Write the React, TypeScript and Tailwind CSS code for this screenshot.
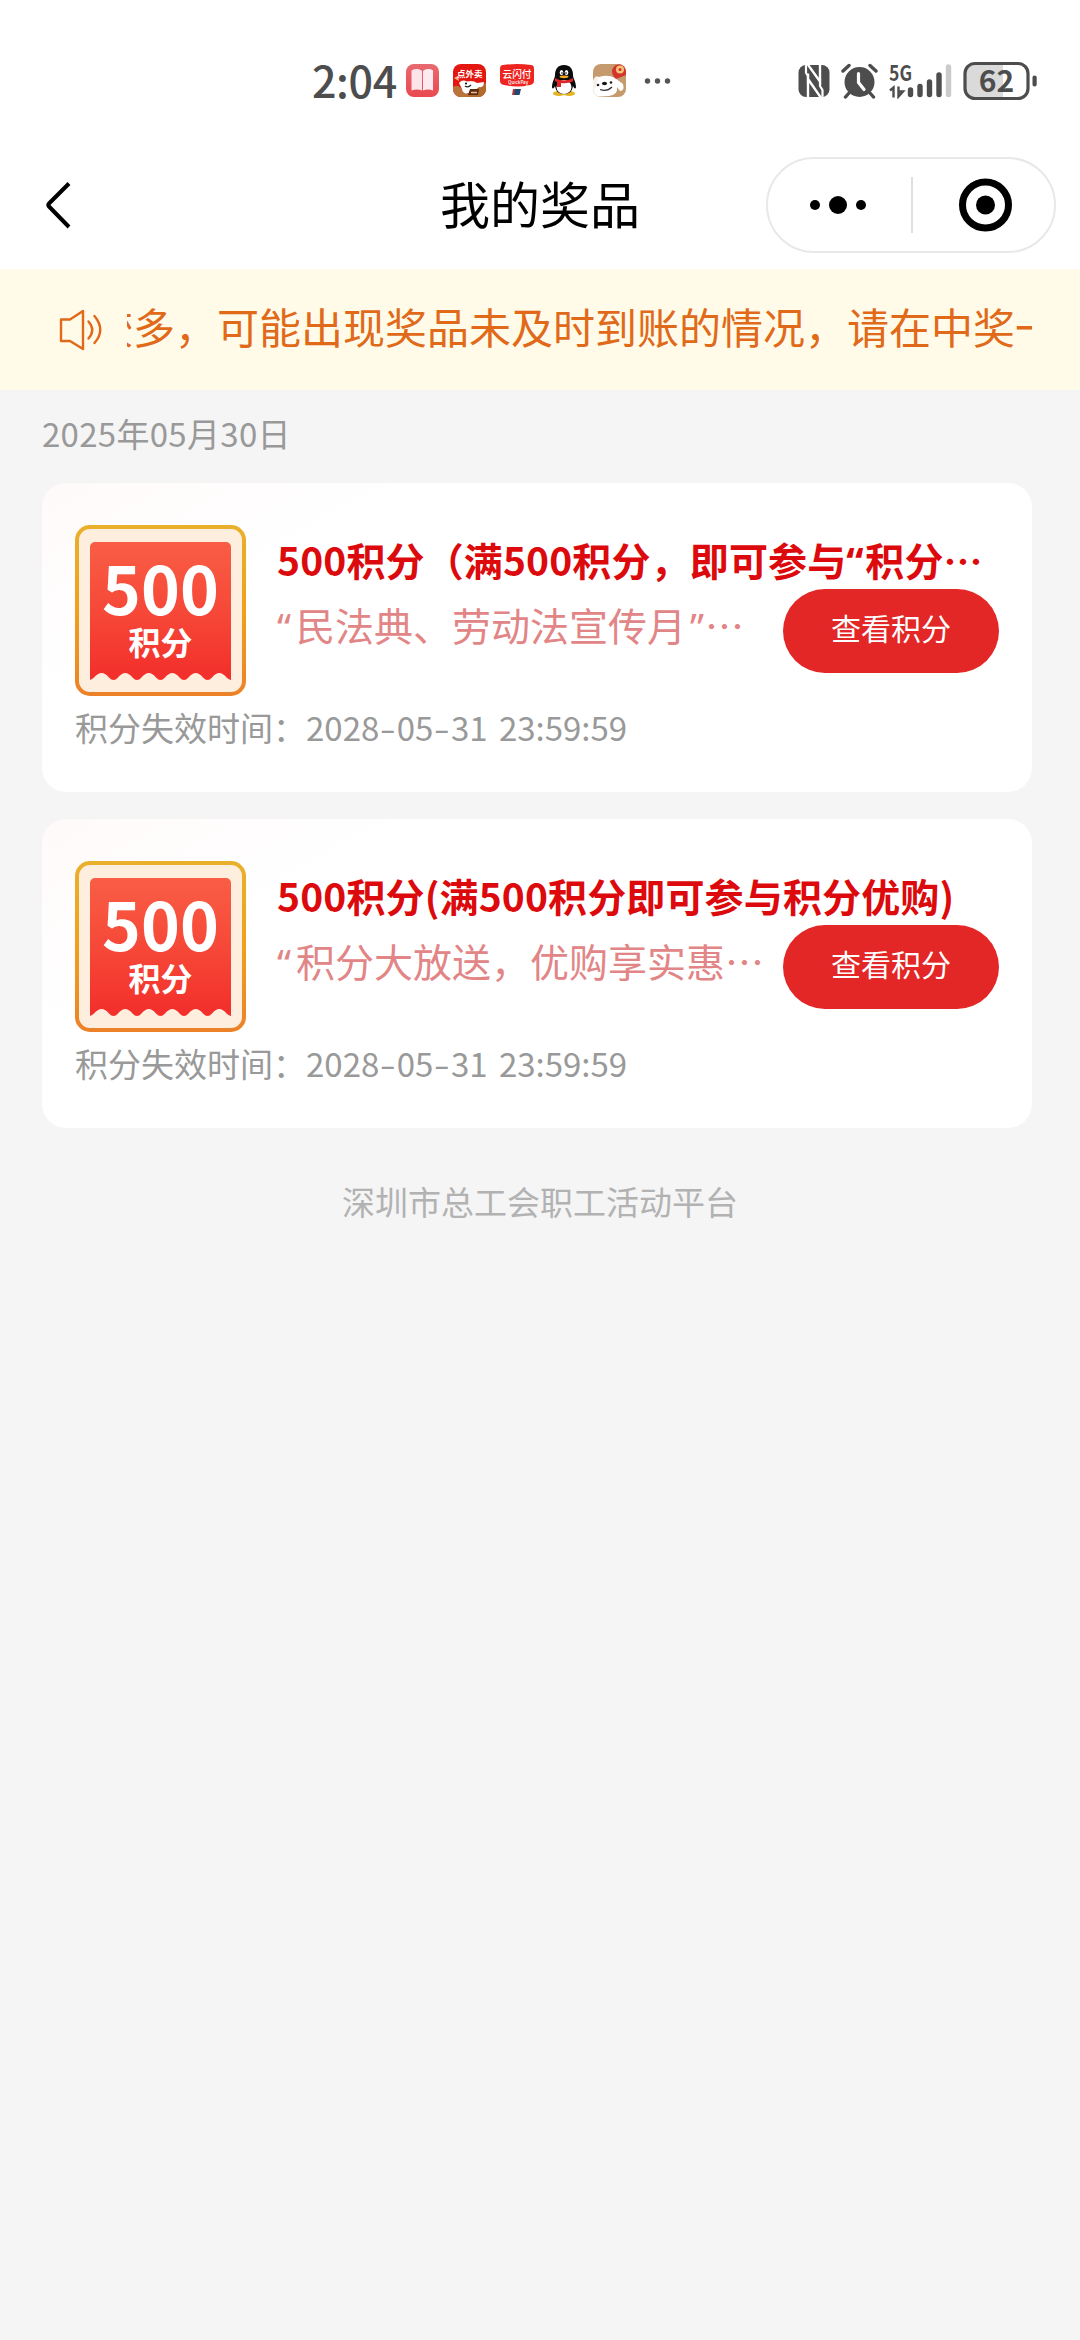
import React from "react";

const ink = "#4d4d4d";

function StatusBar() {
  return (
    <div className="flex h-[160px] w-full items-start pt-[60px] text-[#4d4d4d]">
      <div className="ml-[312px] h-[42px] w-[94px] text-[43px] font-medium leading-[38px] tracking-[-0.4px]">2:04</div>
      <div className="mt-[4px] flex h-[33px] items-center">
        {/* reader */}
        <svg width="33" height="33" viewBox="0 0 33 33">
          <defs>
            <linearGradient id="reader" x1="0" y1="0" x2="0" y2="1">
              <stop offset="0" stopColor="#e86a70" />
              <stop offset="1" stopColor="#e9494f" />
            </linearGradient>
          </defs>
          <rect width="33" height="33" rx="8" fill="url(#reader)" />
          <path d="M5.5 6.5C9 4.5 13 4.500 16 7V26.500C13 25 9 25 5.500 26.500Z" fill="#fde3ea" />
          <path d="M27 6.500C24 4.500 20 4.500 17 7V26.500C20 25 24 25 27 26.500Z" fill="#fdeaf0" />
        </svg>
        {/* takeaway */}
        <svg className="ml-[14px]" width="33" height="33" viewBox="0 0 33 33">
          <clipPath id="takeaway"><rect width="33" height="33" rx="8" /></clipPath>
          <g clipPath="url(#takeaway)">
            <rect width="33" height="33" fill="#e3170f" />
            <path d="M0 23Q4 20 8 24L18 33H0Z" fill="#b8743a" />
            <path d="M20 23L33 19V33H14Z" fill="#b06a2c" />
            <path d="M6 19Q9 15 14 17.500Q20 16 24 19L31 18Q31 24 26 23L20 28Q10 32 9 25Z" fill="#fff" />
            <path d="M1 14L5 12L6 17Z" fill="#f5b48a" />
            <path d="M17 25H26L25 31H15Z" fill="#5b2c12" />
            <path d="M18 28.500H24" stroke="#e9c08d" strokeWidth="1.500" />
            <path d="M12 22Q15 24 18 21" stroke="#222" strokeWidth="1.200" fill="none" />
            <circle cx="13" cy="19.500" r="1.100" fill="#111" />
            <text x="4" y="12.500" fontSize="8.500" fontWeight="700" fill="#fff">点外卖</text>
          </g>
        </svg>
        {/* quick pay */}
        <svg className="ml-[14px]" width="34" height="33" viewBox="0 0 34 33">
          <path d="M3 1Q17 -1 31 1Q34 1 34 5V17Q34 20 30 21Q17 24 4 21Q0 20 0 17V5Q0 1 3 1Z" fill="#ee2420" />
          <text x="2.500" y="13.500" fontSize="9.700" fontWeight="500" fill="#fff">云闪付</text>
          <text x="8" y="19.500" fontSize="4.500" fontWeight="500" fill="#fff">QuickPay</text>
          <path d="M13 25H17L15.500 31H12Z" fill="#b9343c" />
          <path d="M15 25H21L19.500 31H14Z" fill="#22486f" />
        </svg>
        {/* penguin */}
        <svg className="ml-[17px]" width="26" height="33" viewBox="0 0 26 33">
          <ellipse cx="8" cy="29.500" rx="6" ry="2.500" fill="#e6b422" />
          <ellipse cx="18" cy="29.500" rx="6" ry="2.500" fill="#e6b422" />
          <path d="M13 1C7 1 4 5 4 11C4 14 1 18 1 23C1 25 3 25 4 22C5 28 8 30 13 30S21 28 22 22C23 25 25 25 25 23C25 18 22 14 22 11C22 5 19 1 13 1Z" fill="#0b0b0b" />
          <ellipse cx="13" cy="23" rx="7.500" ry="7" fill="#fff" />
          <ellipse cx="10.500" cy="8.500" rx="1.800" ry="2.600" fill="#fff" />
          <ellipse cx="15.500" cy="8.500" rx="1.800" ry="2.600" fill="#fff" />
          <circle cx="11" cy="9" r=".8" fill="#000" />
          <circle cx="15" cy="9" r=".8" fill="#000" />
          <ellipse cx="13" cy="12.800" rx="4.500" ry="1.400" fill="#f4a91c" />
          <path d="M4 14Q13 19 22 14V17.500Q16 20 10 19V23H6V18L4 17Z" fill="#df2626" />
        </svg>
        {/* puppy */}
        <svg className="ml-[16px]" width="33" height="33" viewBox="0 0 33 33">
          <clipPath id="puppy"><rect width="33" height="33" rx="8" /></clipPath>
          <g clipPath="url(#puppy)">
            <rect width="33" height="33" fill="#c59a6d" />
            <path d="M0 33V17Q2 11 6 13Q15 10 22 14L30 20Q32 27 27 27L24 23Q25 31 16 32Z" fill="#fff" />
            <path d="M0 18Q2 11 5 13L3 23L0 26Z" fill="#f7f1ea" />
            <path d="M19 6Q21 0 28 0L33 1V11L23 15Q19 12 19 6Z" fill="#d4352b" />
            <circle cx="27" cy="5.500" r="4" fill="#f4c27b" />
            <circle cx="27" cy="5.500" r="1.500" fill="#d4352b" />
            <circle cx="5" cy="21" r="1.300" fill="#222" />
            <circle cx="18" cy="18.500" r="1.300" fill="#222" />
            <ellipse cx="11.500" cy="19.500" rx="2.500" ry="1.800" fill="#151515" />
            <path d="M7 25.500Q14 28 19 23" stroke="#333" strokeWidth="1.200" fill="none" />
          </g>
        </svg>
        <svg className="ml-[18px]" width="30" height="8" viewBox="0 0 30 8" fill="#555">
          <circle cx="3.500" cy="4" r="2.700" />
          <circle cx="13.500" cy="4" r="2.700" />
          <circle cx="23.500" cy="4" r="2.700" />
        </svg>
      </div>
      <div className="ml-auto mr-[42px] flex h-[42px] items-center">
        {/* nfc */}
        <svg width="32" height="34" viewBox="0 0 32 34">
          <clipPath id="nfc"><rect x=".5" y="1" width="31" height="32" rx="7.500" /></clipPath>
          <g clipPath="url(#nfc)">
            <rect width="32" height="34" fill={ink} />
            <path d="M8 -2L22 17.500V-2" fill="none" stroke="#fff" strokeWidth="2.400" />
            <path d="M10 36V9.500M10 15L24.500 36" fill="none" stroke="#fff" strokeWidth="2.400" />
            <path d="M8 0V9L10 12V20" fill="none" stroke="#fff" strokeWidth="2.200" />
            <path d="M22 14V22L24.500 26V34" fill="none" stroke="#fff" strokeWidth="2.200" />
          </g>
        </svg>
        {/* alarm */}
        <svg className="ml-[11px]" width="37" height="36" viewBox="0 0 37 36">
          <circle cx="18.500" cy="19" r="15" fill={ink} />
          <path d="M2 8L8 2.500M35 8L29 2.500M8 30L4.500 34M29 30L32.500 34" stroke={ink} strokeWidth="3.400" strokeLinecap="round" />
          <path d="M17.500 10.500V19.500L23 26.500" stroke="#fff" strokeWidth="3.200" fill="none" strokeLinecap="round" strokeLinejoin="round" />
        </svg>
        {/* signal */}
        <svg className="ml-[11px]" width="63" height="36" viewBox="0 0 63 36">
          <text x="0" y="17.500" fontSize="21.500" fontWeight="700" fill={ink} textLength="23" lengthAdjust="spacingAndGlyphs">5G</text>
          <path d="M1 27.500L4.500 24.500V34.500M9.500 23.500V33.500L14 28.500H10" stroke={ink} strokeWidth="2.400" fill="none" />
          <g strokeWidth="5.400" strokeLinecap="round" stroke={ink}>
            <path d="M21.500 27V31.500M31 23.500V31.500M40.500 19V31.500M50 12V31.500" />
            <path d="M59.500 4V31.500" stroke="#cbcbcb" />
          </g>
        </svg>
        {/* battery */}
        <svg className="ml-[11px]" width="75" height="40" viewBox="0 0 75 40">
          <clipPath id="charge"><rect x="3" y="3" width="37" height="34" /></clipPath>
          <rect x="2" y="2.500" width="63" height="35" rx="10" fill="#dadada" clipPath="url(#charge)" />
          <rect x="2" y="2.500" width="63" height="35" rx="10" fill="none" stroke={ink} strokeWidth="3.200" />
          <rect x="69.500" y="14.500" width="4.200" height="11" rx="2" fill={ink} />
          <text x="33.500" y="31" fontSize="30" fontWeight="700" textAnchor="middle" fill={ink}>62</text>
        </svg>
      </div>
    </div>
  );
}

function NavBar() {
  return (
    <div className="grid h-[109px] w-full grid-cols-[1fr_auto_1fr] items-start">
      <svg className="ml-[42px] mt-[20px]" width="32" height="50" viewBox="0 0 32 50">
        <path d="M27 3.500L7 23.500Q5.500 25 7 26.500L27 47" fill="none" stroke="#000" strokeWidth="4" />
      </svg>
      <div className="h-[84px] text-[50px] leading-[84px] text-black">我的奖品</div>
      <div className="-mt-[3px] ml-auto mr-[24px] flex h-[96px] w-[290px] items-center rounded-full border-2 border-[#e8e8e8]">
        <svg width="143" height="60" viewBox="0 0 143 60">
          <circle cx="47" cy="30" r="5" />
          <circle cx="70" cy="30" r="9" />
          <circle cx="93" cy="30" r="5" />
        </svg>
        <div className="h-[56px] w-[2px] bg-[#dfdfdf]" />
        <svg width="141" height="60" viewBox="0 0 141 60">
          <circle cx="72.500" cy="30" r="23" fill="none" stroke="#000" strokeWidth="7" />
          <circle cx="72.500" cy="30" r="9.500" />
        </svg>
      </div>
    </div>
  );
}

function Notice() {
  return (
    <div className="flex h-[121px] w-full items-start bg-[#fffbe8] pr-[48px] text-[#e0691a]">
      <svg className="ml-[58px] mt-[39px] shrink-0" width="48" height="44" viewBox="0 0 48 44" fill="none" stroke="#e0691a" strokeWidth="2.400" strokeLinejoin="round">
        <path d="M3 11.500H12L25 3V41L12 33H3Z" />
        <path d="M30.500 13.500Q38 22 30.500 30.500" strokeLinecap="round" />
        <path d="M36.500 8Q48 22 36.500 35" strokeLinecap="round" />
      </svg>
      <div className="ml-[21px] w-[905px] overflow-hidden whitespace-nowrap">
        <div className="-ml-[36px] text-[42px] leading-[114px]">较多，可能出现奖品未及时到账的情况，请在中奖一</div>
      </div>
    </div>
  );
}

function PointsBadge() {
  return (
    <div className="h-[171px] w-[171px] shrink-0 rounded-[15px] bg-linear-to-b from-[#e9b02c] via-[#f0a01c] to-[#ec8128] p-[4px]">
      <div className="h-full rounded-[11px] bg-[#fdeede] px-[11px] pt-[13px]">
        <div className="flex h-[131px] flex-col items-center rounded-t-[5px] bg-linear-to-b from-[#f95d45] to-[#f3302c] font-bold text-white">
          <div className="mt-[12px] h-[64px] text-[66px] leading-[64px]">500</div>
          <div className="mt-[4px] text-[32px] leading-[38px]">积分</div>
        </div>
        <svg className="block" width="141" height="7" viewBox="0 0 141 7">
          <path
            d="M0 0V7Q2 6 4 4.500Q11.800 -4.500 19 4.500Q23.500 9.500 28 4.500Q35.300 -4.500 42.500 4.500Q47 9.500 51.500 4.500Q58.800 -4.500 66 4.500Q70.500 9.500 75 4.500Q82.300 -4.500 89.500 4.500Q94 9.500 98.500 4.500Q105.800 -4.500 113 4.500Q117.500 9.500 122 4.500Q129.300 -4.500 136.500 4.500Q139 6.500 141 7V0Z"
            fill="#f3302c"
          />
        </svg>
      </div>
    </div>
  );
}

function Quote({ children }: { children: string }) {
  return <span className="inline-block w-[19px] font-['Noto_Sans']">{children}</span>;
}

function Dash() {
  return <span className="inline-block w-[17.500px] scale-x-140 text-center">-</span>;
}

function PrizeCard({ title, desc }: { title: React.ReactNode; desc: React.ReactNode }) {
  return (
    <div className="h-[309px] rounded-[24px] bg-white bg-linear-[150deg] from-[#fffafa] via-white via-25% to-white px-[33px] pt-[42px]">
      <div className="flex">
        <PointsBadge />
        <div className="ml-[31px] flex-1 whitespace-nowrap">
          <div className="h-[64px] pt-[6px] text-[39px] font-bold leading-[56px] tracking-[0.13px] text-[#dc0a0c]">{title}</div>
          <div className="flex items-start justify-between">
            <div className="text-[39px] leading-[70px] text-[#e28586]">{desc}</div>
            <button className="h-[84px] w-[216px] rounded-full bg-[#e32626] pb-[7px] text-[30px] leading-[77px] text-white">查看积分</button>
          </div>
        </div>
      </div>
      <div className="text-[33px] leading-[62px] text-[#999] [word-spacing:4px]">
        积分失效时间：2028<Dash />05<Dash />31 23:59:59
      </div>
    </div>
  );
}

export default function App() {
  return (
    <div lang="zh-CN" className="flex min-h-[2340px] w-[1080px] flex-col bg-[#f5f5f5] font-['Noto_Sans_CJK_SC',sans-serif]">
      <div className="bg-white">
        <StatusBar />
        <NavBar />
      </div>
      <Notice />
      <div className="flex flex-col px-[42px]">
        <div className="h-[93px] text-[33px] leading-[86px] tracking-[0.3px] text-[#999]">2025年05月30日</div>
        <div className="flex flex-col gap-[27px] pr-[6px]">
          <PrizeCard
            title={<>500积分（满500积分，即可参与<Quote>“</Quote>积分…</>}
            desc={<><Quote>“</Quote>民法典、劳动法宣传月<span className="-mr-[4px] ml-[4px]"><Quote>”</Quote></span>…</>}
          />
          <PrizeCard title="500积分(满500积分即可参与积分优购)" desc={<><Quote>“</Quote>积分大放送，优购享实惠…</>} />
        </div>
        <div className="mt-[40px] text-center text-[33px] leading-[66px] text-[#b2b2b2]">深圳市总工会职工活动平台</div>
      </div>
    </div>
  );
}
